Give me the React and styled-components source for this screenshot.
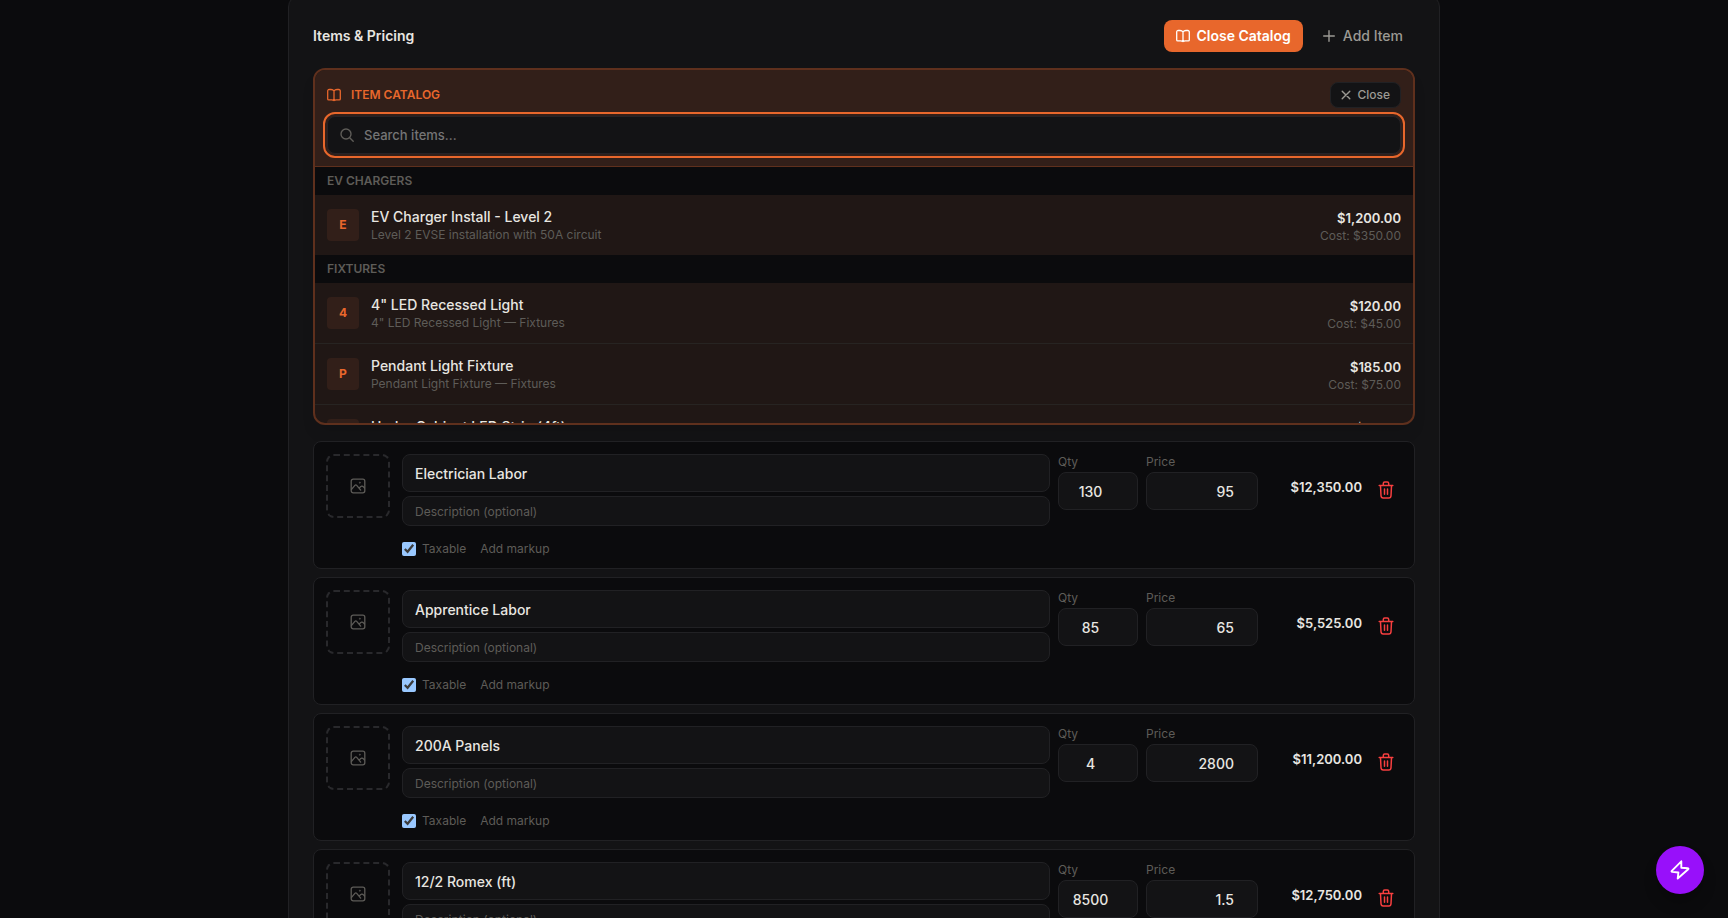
import React, { useState } from 'react';
import styled, { createGlobalStyle } from 'styled-components';

const c = {
  page: '#0b0b0d',
  panel: '#131315',
  well: '#0b0b0d',
  line: '#212124',
  dash: '#29292c',
  text: '#e8e6e1',
  soft: '#9c9a94',
  muted: '#5e5c58',
  accent: '#e8672c',
};

const GlobalStyle = createGlobalStyle`
  *, *::before, *::after { box-sizing: border-box; }
  html { color-scheme: dark; }
  body {
    margin: 0;
    height: 100vh;
    overflow: hidden;
    background: ${c.page};
    color: ${c.text};
    font-family: Inter, "Liberation Sans", sans-serif;
    font-size: 14px;
    line-height: 20px;
  }
  button, input { font: inherit; color: inherit; }
  button { border: 0; margin: 0; cursor: pointer; }
  h2, h3, h4, p, ul { margin: 0; padding: 0; font-weight: inherit; font-size: inherit; }
  ul { list-style: none; }
`;

const Page = styled.main`
  max-width: 1152px;
  margin: -5px auto 0;
`;

const Panel = styled.section`
  padding: 24px;
  background: ${c.panel};
  border: 1px solid ${c.line};
  border-radius: 12px;
`;

const PanelHeader = styled.header`
  display: flex;
  align-items: center;
  justify-content: space-between;
  margin-bottom: 16px;
`;

const PanelTitle = styled.h2`
  && { font-weight: 600; }
`;

const Actions = styled.div`
  display: flex;
  gap: 8px;
`;

const Button = styled.button`
  display: inline-flex;
  align-items: center;
  gap: ${(p) => (p.$primary ? 6 : 8)}px;
  height: 32px;
  padding: 0 12px;
  border-radius: 8px;
  font-weight: ${(p) => (p.$primary ? 600 : 500)};
  background: ${(p) => (p.$primary ? c.accent : 'transparent')};
  color: ${(p) => (p.$primary ? '#fff' : c.soft)};
`;

const Catalog = styled.section`
  margin-bottom: 16px;
  overflow: hidden;
  border: 2px solid #5f301d;
  border-radius: 12px;
  background: #201715;
  box-shadow: 0 10px 15px -3px rgba(0, 0, 0, 0.1);
`;

const CatalogHead = styled.div`
  padding: 12px;
  background: #321f19;
  border-bottom: 1px solid #5f301d;
`;

const CatalogBar = styled.div`
  display: flex;
  align-items: center;
  justify-content: space-between;
  margin-bottom: 8px;
`;

const CatalogTitle = styled.h3`
  && {
    display: flex;
    align-items: center;
    gap: 10px;
    color: ${c.accent};
    font-size: 12px;
    font-weight: 600;
    line-height: 16px;
  }
  text-transform: uppercase;
`;

const CloseButton = styled.button`
  display: inline-flex;
  align-items: center;
  gap: 6px;
  height: 26px;
  padding: 0 10px;
  border: 1px solid ${c.line};
  border-radius: 8px;
  background: ${c.panel};
  color: ${c.soft};
  font-size: 12px;
  font-weight: 500;
`;

const SearchBox = styled.label`
  display: flex;
  align-items: center;
  gap: 10px;
  height: 38px;
  padding: 0 12px;
  background: ${c.panel};
  border: 1px solid #252327;
  border-radius: 8px;
  outline: 2px solid ${c.accent};
  outline-offset: 2px;
  color: ${c.muted};
`;

const SearchInput = styled.input`
  flex: 1;
  min-width: 0;
  padding: 0;
  border: 0;
  outline: 0;
  background: transparent;
  color: ${c.text};
  font-size: 13px;
  font-weight: 500;
  &::placeholder { color: #757575; }
`;

const CatalogList = styled.div`
  max-height: 256px;
  overflow-y: auto;
  scrollbar-width: none;
`;

const GroupTitle = styled.h4`
  && {
    padding: 6px 12px;
    font-size: 12px;
    line-height: 16px;
    font-weight: 600;
  }
  background: ${c.page};
  color: ${c.muted};
  text-transform: uppercase;
`;

const CatalogRow = styled.li`
  & + & { border-top: 1px solid #272422; }
`;

const CatalogItem = styled.button`
  display: flex;
  align-items: center;
  gap: 12px;
  width: 100%;
  height: 60px;
  padding: 0 12px;
  background: transparent;
  text-align: left;
`;

const Initial = styled.span`
  display: grid;
  place-items: center;
  width: 32px;
  height: 32px;
  border-radius: 4px;
  background: #321f19;
  color: ${c.accent};
  font-size: 12px;
  font-weight: 700;
`;

const ItemText = styled.span`
  flex: 1;
  display: flex;
  flex-direction: column;
`;

const ItemPrice = styled.span`
  display: flex;
  flex-direction: column;
  align-items: flex-end;
  padding-top: 2px;
`;

const Strong = styled.span`
  font-size: ${(p) => (p.$price ? 13 : 14)}px;
  font-weight: ${(p) => (p.$price ? 600 : 500)};
`;

const Small = styled.span`
  color: ${c.muted};
  font-size: 12px;
  line-height: 16px;
`;

const Lines = styled.ul`
  display: flex;
  flex-direction: column;
  gap: 8px;
`;

const Line = styled.li`
  display: flex;
  align-items: flex-start;
  gap: 8px;
  padding: 12px 12px 11px;
  background: ${c.well};
  border: 1px solid ${c.line};
  border-radius: 8px;
`;

const Thumb = styled.button`
  display: grid;
  place-items: center;
  flex: none;
  width: 64px;
  height: 64px;
  margin-right: 4px;
  padding: 0;
  background: transparent;
  border: 2px dashed ${c.dash};
  border-radius: 8px;
  color: ${c.muted};
`;

const Main = styled.div`
  flex: 1;
  min-width: 0;
  display: flex;
  flex-direction: column;
  gap: 4px;
`;

const Field = styled.input`
  width: 100%;
  height: ${(p) => (p.$small ? 30 : 38)}px;
  padding: 0 12px;
  background: ${c.panel};
  border: 1px solid ${c.line};
  border-radius: 8px;
  color: ${c.text};
  font-size: ${(p) => (p.$small ? 12 : 14)}px;
  font-weight: ${(p) => (p.$small ? 400 : 500)};
  &::placeholder { color: ${c.muted}; }
`;

const NumberField = styled(Field)`
  padding: 0 8px;
  text-align: ${(p) => p.$align};
`;

const Options = styled.div`
  display: flex;
  align-items: center;
  gap: 14px;
  height: 16px;
  margin-top: 11px;
  color: ${c.muted};
  font-size: 12px;
  line-height: 16px;
`;

const Check = styled.label`
  display: flex;
  align-items: center;
  gap: 6px;
  input { width: 14px; height: 14px; margin: 0; }
`;

const TextButton = styled.button`
  padding: 0;
  background: transparent;
  color: ${c.muted};
`;

const NumberGroup = styled.label`
  display: flex;
  flex-direction: column;
  gap: 2px;
  flex: none;
  width: ${(p) => p.$width}px;
  color: ${c.muted};
  font-size: 12px;
  line-height: 16px;
`;

const Amount = styled.output`
  flex: none;
  width: 96px;
  margin-top: 23px;
  text-align: right;
  font-size: 13px;
  font-weight: 600;
`;

const DeleteButton = styled.button`
  display: grid;
  place-items: center;
  flex: none;
  width: 32px;
  height: 32px;
  margin-top: 20px;
  padding: 0;
  background: transparent;
  color: #f83f3f;
`;

const QuickButton = styled.button`
  position: fixed;
  right: 24px;
  bottom: 24px;
  display: grid;
  place-items: center;
  width: 48px;
  height: 48px;
  padding: 0;
  border-radius: 50%;
  background: #9810fa;
  color: #fff;
  box-shadow: 0 10px 15px -3px rgba(0, 0, 0, 0.3);
`;

const Icon = ({ size = 16, stroke = 1.2, children }) => (
  <svg
    width={size}
    height={size}
    viewBox={`0 0 ${size} ${size}`}
    fill="none"
    stroke="currentColor"
    strokeWidth={stroke}
    strokeLinecap="round"
    strokeLinejoin="round"
    aria-hidden="true"
  >
    {children}
  </svg>
);

const BookIcon = () => (
  <Icon size={14} stroke={1.3}>
    <path d="M7 2.800v9.400M7 2.800C6.300 1.900 5.300 1.500 4 1.500H2.200C1.300 1.500.7 2.100.7 3v7.900c0 .6.4 1 1.100 1h2.900c1 0 1.700.1 2.300.6.600-.5 1.300-.6 2.300-.6h2.900c.7 0 1.100-.4 1.100-1V3c0-.9-.6-1.500-1.500-1.500H10C8.700 1.500 7.700 1.900 7 2.800Z" />
  </Icon>
);
const PlusIcon = () => (
  <Icon size={12} stroke={1.4}><path d="M6 .7v10.600M.7 6h10.600" /></Icon>
);
const CloseIcon = () => (
  <Icon size={10} stroke={1.4}><path d="M1.200 1.200l7.600 7.600M8.800 1.200l-7.600 7.600" /></Icon>
);
const SearchIcon = () => (
  <Icon size={14} stroke={1.4}><circle cx="6" cy="6" r="5" /><path d="M9.700 9.700l3.500 3.500" /></Icon>
);
const ImageIcon = () => (
  <Icon stroke={1.3}>
    <rect x="1.200" y="1.200" width="13.600" height="13.600" rx="2" />
    <path d="M1.500 11.300l3.400-4c.6-.7 1.200-.7 1.800 0l4 4.800M9.500 9.800c1.300-2 3-2.200 4-.9l1 1.100" />
    <circle cx="9.800" cy="4.600" r=".3" />
  </Icon>
);
const TrashIcon = () => (
  <Icon size={18} stroke={1.5}>
    <path d="M2.200 4.500h13.600M6.300 4.300V2.500c0-.9.500-1.500 1.400-1.500h2.600c.9 0 1.400.6 1.400 1.500v1.800M3.500 4.700l.5 10c.1 1.500.8 2.200 2.200 2.200h5.600c1.400 0 2.100-.7 2.200-2.200l.5-10M7.500 8v5.300M10.500 8v5.300" />
  </Icon>
);
const BoltIcon = () => (
  <Icon size={20} stroke={1.900}>
    <path d="M11.300 1.300L1.800 10.800c-.5.500-.3 1 .4 1.100l6.200.6-.7 6L18.200 9.200c.5-.5.300-1-.4-1l-6.500-.5z" />
  </Icon>
);

const GROUPS = [
  {
    name: 'EV Chargers',
    items: [['EV Charger Install - Level 2', 'Level 2 EVSE installation with 50A circuit', '$1,200.00', '$350.00']],
  },
  {
    name: 'Fixtures',
    items: [
      ['4" LED Recessed Light', '4" LED Recessed Light — Fixtures', '$120.00', '$45.00'],
      ['Pendant Light Fixture', 'Pendant Light Fixture — Fixtures', '$185.00', '$75.00'],
      ['Under Cabinet LED Strip (4ft)', 'Under Cabinet LED Strip (4ft) — Fixtures', '$85.00', '$35.00'],
    ],
  },
];

const LINES = [
  { name: 'Electrician Labor', qty: 130, price: 95 },
  { name: 'Apprentice Labor', qty: 85, price: 65 },
  { name: '200A Panels', qty: 4, price: 2800 },
  { name: '12/2 Romex (ft)', qty: 8500, price: 1.5 },
];

const money = (n) =>
  n.toLocaleString('en-US', { style: 'currency', currency: 'USD' });

function LineItem({ item }) {
  const [qty, setQty] = useState(item.qty);
  const [price, setPrice] = useState(item.price);
  return (
    <Line>
      <Thumb aria-label="Add image"><ImageIcon /></Thumb>
      <Main>
        <Field aria-label="Item name" defaultValue={item.name} />
        <Field $small aria-label="Description" placeholder="Description (optional)" />
        <Options>
          <Check><input type="checkbox" defaultChecked />Taxable</Check>
          <TextButton>Add markup</TextButton>
        </Options>
      </Main>
      <NumberGroup $width={80}>
        Qty
        <NumberField type="number" $align="center" value={qty} onChange={(e) => setQty(e.target.value)} />
      </NumberGroup>
      <NumberGroup $width={112}>
        Price
        <NumberField type="number" $align="right" value={price} onChange={(e) => setPrice(e.target.value)} />
      </NumberGroup>
      <Amount>{money(qty * price)}</Amount>
      <DeleteButton aria-label="Delete item"><TrashIcon /></DeleteButton>
    </Line>
  );
}

export default function App() {
  return (
    <>
      <GlobalStyle />
      <Page>
        <Panel>
          <PanelHeader>
            <PanelTitle>Items &amp; Pricing</PanelTitle>
            <Actions>
              <Button $primary><BookIcon />Close Catalog</Button>
              <Button><PlusIcon />Add Item</Button>
            </Actions>
          </PanelHeader>
          <Catalog>
            <CatalogHead>
              <CatalogBar>
                <CatalogTitle><BookIcon />Item Catalog</CatalogTitle>
                <CloseButton><CloseIcon />Close</CloseButton>
              </CatalogBar>
              <SearchBox>
                <SearchIcon />
                <SearchInput type="search" aria-label="Search items" placeholder="Search items..." />
              </SearchBox>
            </CatalogHead>
            <CatalogList>
              {GROUPS.map((group) => (
                <section key={group.name}>
                  <GroupTitle>{group.name}</GroupTitle>
                  <ul>
                    {group.items.map(([name, note, price, cost]) => (
                      <CatalogRow key={name}>
                        <CatalogItem>
                          <Initial>{name[0]}</Initial>
                          <ItemText>
                            <Strong>{name}</Strong>
                            <Small>{note}</Small>
                          </ItemText>
                          <ItemPrice>
                            <Strong $price>{price}</Strong>
                            <Small>Cost: {cost}</Small>
                          </ItemPrice>
                        </CatalogItem>
                      </CatalogRow>
                    ))}
                  </ul>
                </section>
              ))}
            </CatalogList>
          </Catalog>
          <Lines>
            {LINES.map((item) => <LineItem key={item.name} item={item} />)}
          </Lines>
        </Panel>
      </Page>
      <QuickButton aria-label="Quick actions"><BoltIcon /></QuickButton>
    </>
  );
}
